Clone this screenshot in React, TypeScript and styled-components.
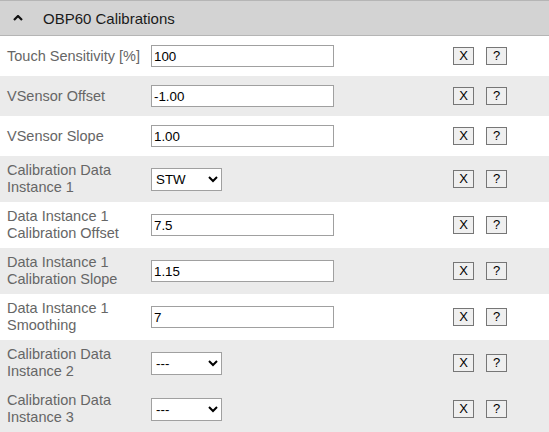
import styled, { createGlobalStyle } from 'styled-components';

type Field = {
  label: string;
  kind: 'text' | 'select';
  value: string;
  options?: string[];
  shaded: boolean;
};

const fields: Field[] = [
  { label: 'Touch Sensitivity [%]', kind: 'text', value: '100', shaded: false },
  { label: 'VSensor Offset', kind: 'text', value: '-1.00', shaded: true },
  { label: 'VSensor Slope', kind: 'text', value: '1.00', shaded: false },
  { label: 'Calibration Data Instance 1', kind: 'select', value: 'STW', options: ['---', 'STW', 'AWA', 'AWS'], shaded: true },
  { label: 'Data Instance 1 Calibration Offset', kind: 'text', value: '7.5', shaded: false },
  { label: 'Data Instance 1 Calibration Slope', kind: 'text', value: '1.15', shaded: true },
  { label: 'Data Instance 1 Smoothing', kind: 'text', value: '7', shaded: false },
  { label: 'Calibration Data Instance 2', kind: 'select', value: '---', options: ['---', 'STW', 'AWA', 'AWS'], shaded: true },
  { label: 'Calibration Data Instance 3', kind: 'select', value: '---', options: ['---', 'STW', 'AWA', 'AWS'], shaded: true },
];

export default function App() {
  return (
    <>
      <GlobalStyle />
      <Section>
        <Header>
          <Chevron viewBox="0 0 10 6" aria-hidden="true">
            <path d="M1 5 L5 1 L9 5" />
          </Chevron>
          <Title>OBP60 Calibrations</Title>
        </Header>
        {fields.map(f => (
          <Row key={f.label} $shaded={f.shaded}>
            <Label>{f.label}</Label>
            <div>
              {f.kind === 'text' ? (
                <TextInput defaultValue={f.value} />
              ) : (
                <Select defaultValue={f.value}>
                  {f.options?.map(o => (
                    <option key={o}>{o}</option>
                  ))}
                </Select>
              )}
            </div>
            <Actions>
              <SmallButton>X</SmallButton>
              <SmallButton>?</SmallButton>
            </Actions>
          </Row>
        ))}
      </Section>
    </>
  );
}

const GlobalStyle = createGlobalStyle`
  body {
    margin: 0;
    font-family: "Liberation Sans", Arial, sans-serif;
    background: #fff;
  }
`;

const Section = styled.div`
  width: 549px;
`;

const Header = styled.div`
  display: flex;
  align-items: center;
  height: 34px;
  background: #d3d3d3;
  border-top: 1px solid #b5b5b5;
  border-bottom: 1px solid #b5b5b5;
`;

const Chevron = styled.svg`
  width: 10px;
  height: 6px;
  margin: 0 20px 0 13px;
  fill: none;
  stroke: #111;
  stroke-width: 2.2;
`;

const Title = styled.span`
  font-size: 15px;
  color: #1a1a1a;
`;

const Row = styled.div<{ $shaded: boolean }>`
  display: grid;
  grid-template-columns: 151px 302px 1fr;
  align-items: center;
  min-height: 40px;
  padding: 6px 0;
  box-sizing: border-box;
  background: ${p => (p.$shaded ? '#ebebeb' : '#fff')};
`;

const Label = styled.div`
  padding: 0 8px 0 7px;
  font-size: 14.5px;
  line-height: 17px;
  color: #666;
`;

const TextInput = styled.input`
  box-sizing: border-box;
  width: 183px;
  height: 22px;
  padding: 1px 2px;
  border: 1px solid #a0a0a0;
  border-radius: 0;
  font-family: "Liberation Sans", Arial, sans-serif;
  font-size: 13.33px;
  color: #000;
  background: #fff;
`;

const Select = styled.select`
  box-sizing: border-box;
  width: 71px;
  height: 23px;
  border: 1px solid #a0a0a0;
  border-radius: 0;
  font-family: "Liberation Sans", Arial, sans-serif;
  font-size: 13.33px;
  color: #000;
  background: #fff;
`;

const Actions = styled.div`
  display: flex;
  gap: 12px;
`;

const SmallButton = styled.button`
  box-sizing: border-box;
  width: 21px;
  height: 18px;
  padding: 0;
  border: 1px solid #767676;
  border-radius: 0;
  background: #efefef;
  font-family: "Liberation Sans", Arial, sans-serif;
  font-size: 13px;
  line-height: 16px;
  color: #000;
`;
